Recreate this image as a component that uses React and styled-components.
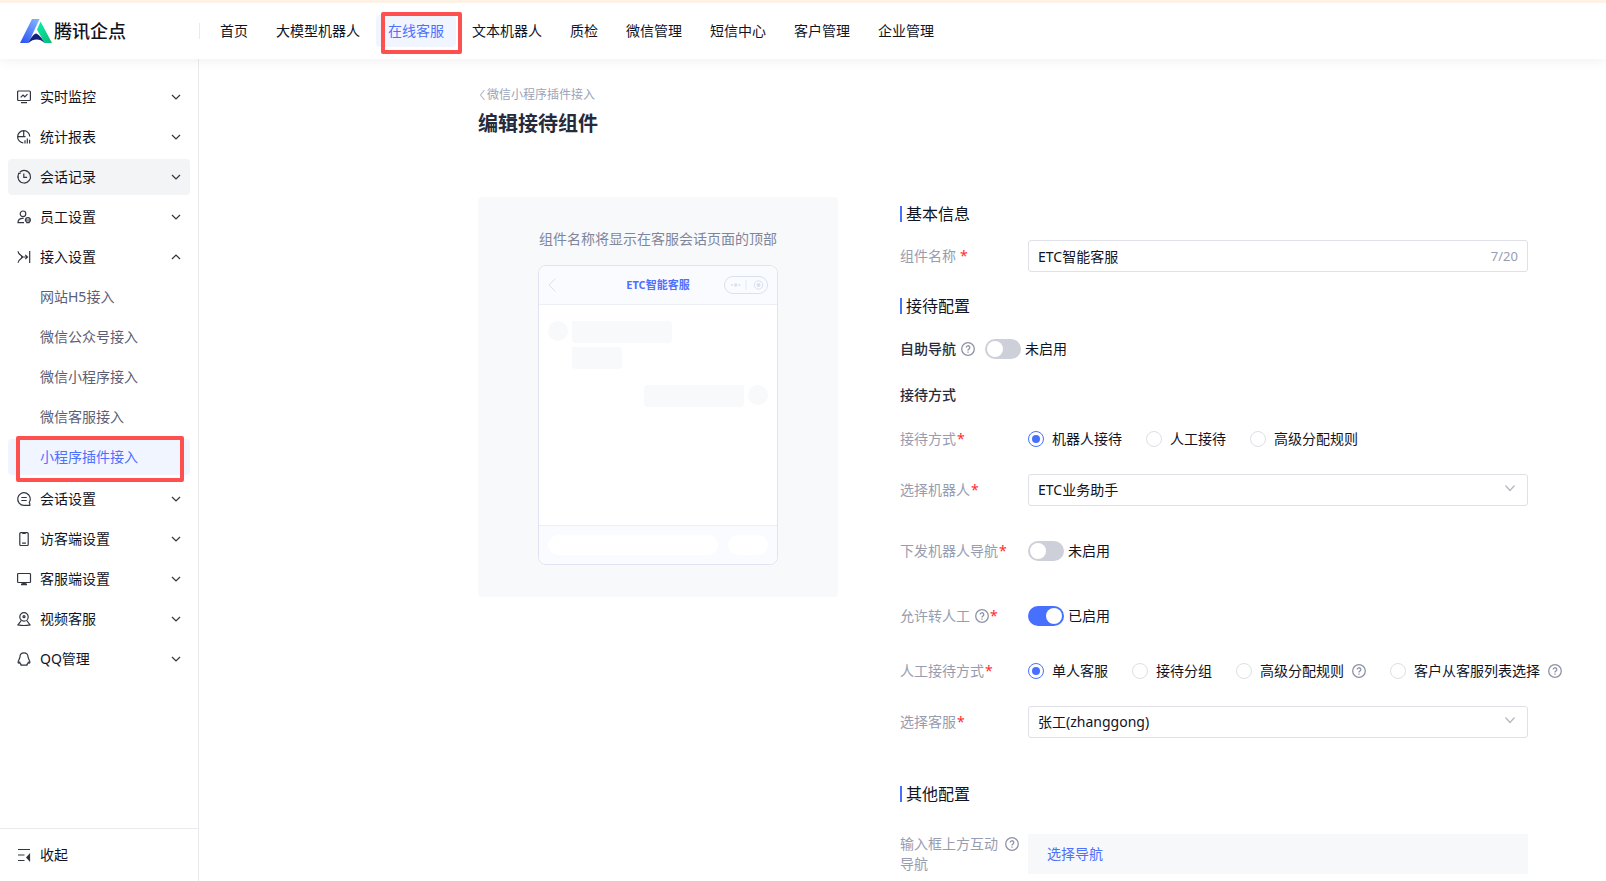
import React, { useState } from "react";
import styled, { createGlobalStyle, css } from "styled-components";

const GlobalStyle = createGlobalStyle`
  * {
    box-sizing: border-box;
  }
  body {
    margin: 0;
    background: #fff;
    color: #11131f;
    font-family: "Noto Sans", "Noto Sans CJK SC", sans-serif;
    font-size: 14px;
    line-height: 20px;
  }
  button, input, select {
    font: inherit;
    color: inherit;
    margin: 0;
  }
  a {
    color: inherit;
    text-decoration: none;
  }
`

const Page = styled.div`
  display: flex;
  flex-direction: column;
  height: 100vh;
  border-top: 3px solid #fef1e6;
  border-bottom: 1px solid #cfd2d6;
  overflow: hidden;
`
const Header = styled.header`
  display: flex;
  align-items: center;
  flex: none;
  height: 56px;
  background: #fff;
  box-shadow: 0 2px 12px rgba(0, 0, 0, .06);
  position: relative;
  z-index: 2;
`
const Brand = styled.a`
  display: flex;
  align-items: center;
  gap: 2px;
  width: 200px;
  flex: none;
  height: 16px;
  padding-left: 20px;
  border-right: 1px solid #e9eaee;
  font-size: 18px;
  font-weight: 500;
  white-space: nowrap;
`
const Nav = styled.nav`
  display: flex;
  gap: 4px;
  padding-left: 8px;
`
const NavLink = styled.a`
  position: relative;
  padding: 6px 12px;
  border-radius: 4px;
  white-space: nowrap;
  ${({ $active }) => $active && css`
    color: #4d70ff;
    background: #f1f5ff;
  `}
`
// red frame that hangs over the highlighted entry
const Marker = styled.span`
  position: absolute;
  border: 4px solid #ff5050;
  border-radius: 2px;
  pointer-events: none;
  z-index: 1;
`
const NavMarker = styled(Marker)`
  top: -3px;
  bottom: -7px;
  left: 5px;
  right: -6px;
`
const SideMarker = styled(Marker)`
  top: -3px;
  bottom: -7px;
  left: 8px;
  right: 6px;
`
const Body = styled.div`
  display: flex;
  flex: 1;
  min-height: 0;
`
const Sidebar = styled.aside`
  display: flex;
  flex-direction: column;
  flex: none;
  width: 199px;
  border-right: 1px solid #e9eaee;
`
const Menu = styled.nav`
  display: flex;
  flex-direction: column;
  gap: 4px;
  flex: 1;
  padding: 20px 8px;
`
const MenuButton = styled.button`
  display: flex;
  align-items: center;
  gap: 8px;
  height: 36px;
  padding: 0 9px 0 8px;
  border: 0;
  border-radius: 4px;
  background: ${({ $hover }) => ($hover ? "#f3f4f6" : "transparent")};
  text-align: left;
  cursor: pointer;
  span {
    flex: 1;
  }
`
const SubMenu = styled.div`
  display: flex;
  flex-direction: column;
  gap: 4px;
  padding-bottom: 2px;
`
const SubLink = styled.a`
  position: relative;
  height: 36px;
  padding: 8px 32px;
  border-radius: 4px;
  color: ${({ $active }) => ($active ? "#4d70ff" : "#5c6075")};
  background: ${({ $active }) => ($active ? "#f1f5ff" : "transparent")};
`
const Collapse = styled(MenuButton)`
  height: 53px;
  padding: 0 16px;
  border-top: 1px solid #e9eaee;
  border-radius: 0;
`
const Main = styled.main`
  flex: 1;
  min-width: 0;
  overflow: hidden;
  padding: 26px 24px 0 279px;
  @media (max-width: 1500px) {
    padding-left: 24px;
    overflow: auto;
  }
`
const BackLink = styled.a`
  display: flex;
  align-items: center;
  gap: 1px;
  color: #9ba3b8;
  font-size: 12px;
`
const PageTitle = styled.h1`
  margin: 4px 0 58px;
  color: #262b3c;
  font-size: 20px;
  font-weight: 700;
  line-height: 30px;
`
const Columns = styled.div`
  display: flex;
  align-items: flex-start;
  gap: 62px;
`
const Preview = styled.section`
  display: flex;
  flex-direction: column;
  align-items: center;
  gap: 16px;
  flex: none;
  width: 360px;
  padding: 32px 0;
  border-radius: 4px;
  background: #f8f9fb;
  color: #7f869c;
`
const Phone = styled.div`
  display: flex;
  flex-direction: column;
  width: 240px;
  height: 300px;
  border: 1px solid #e0e4f0;
  border-radius: 8px;
  background: #fff;
  overflow: hidden;
`
const PhoneBar = styled.div`
  display: flex;
  align-items: center;
  justify-content: space-between;
  height: 39px;
  padding: 0 9px;
  border-bottom: 1px solid #eceef6;
  background: #fafbff;
`
const PhoneTitle = styled.strong`
  flex: 1;
  padding-left: 36px;
  color: #4d70ff;
  font-size: 11px;
  text-align: center;
`
const Chat = styled.div`
  display: flex;
  flex-direction: column;
  gap: 16px;
  flex: 1;
  padding: 16px 9px;
`
const ChatLine = styled.div`
  display: flex;
  gap: 4px;
  flex-direction: ${({ $mine }) => ($mine ? "row-reverse" : "row")};
`
const Bubbles = styled.div`
  display: flex;
  flex-direction: column;
  gap: 4px;
`
const Avatar = styled.div`
  width: 20px;
  height: 20px;
  border-radius: 50%;
  background: #f8f9fb;
`
const Bubble = styled.div`
  width: ${({ $short }) => ($short ? "50px" : "100px")};
  height: 22px;
  border-radius: ${({ $mine }) => ($mine ? "4px 0 4px 4px" : "0 4px 4px 4px")};
  background: #f8f9fb;
`
const PhoneFoot = styled.div`
  display: flex;
  gap: 10px;
  height: 39px;
  padding: 9px;
  border-top: 1px solid #eceef6;
  background: #fafbff;
`
const Pill = styled.div`
  flex: ${({ $grow }) => $grow};
  height: 20px;
  border-radius: 10px;
  background: #fff;
`
const Form = styled.form`
  flex: 1;
  min-width: 0;
  padding-top: 5px;
`
const SectionTitle = styled.h2`
  display: flex;
  align-items: center;
  gap: 4px;
  margin: 0 0 ${({ $gap }) => $gap}px;
  font-size: 16px;
  font-weight: 400;
  line-height: 24px;
  &::before {
    content: "";
    width: 2px;
    height: 16px;
    background: #4770ff;
  }
`
const SubTitle = styled.h3`
  margin: 0 0 ${({ $gap }) => $gap}px;
  color: #262b3c;
  font-size: 14px;
  font-weight: 500;
  line-height: 24px;
`
const Row = styled.div`
  display: flex;
  align-items: center;
  min-height: 32px;
  margin-bottom: ${({ $gap }) => $gap || 0}px;
`
const Label = styled.label`
  flex: none;
  width: 128px;
  color: #989caf;
  white-space: nowrap;
`
const InlineLabel = styled.label`
  margin-right: 10px;
  color: #262b3c;
  font-weight: 500;
  white-space: nowrap;
`
const Star = styled.span`
  margin-left: ${({ $spaced }) => ($spaced ? "4px" : "1px")};
  color: #ff2b2b;
`
const Field = styled.div`
  position: relative;
  flex: 1;
  max-width: 500px;
  height: 32px;
  svg {
    position: absolute;
    top: 8px;
    right: 12px;
    pointer-events: none;
  }
`
const boxStyles = css`
  width: 100%;
  height: 32px;
  padding: 0 9px;
  border: 1px solid #dfe0e8;
  border-radius: 3px;
  background: #fff;
  outline: none;
`
const TextInput = styled.input`
  ${boxStyles}
`
const Select = styled.select`
  ${boxStyles}
  appearance: none;
`
const Counter = styled.span`
  position: absolute;
  top: 6px;
  right: 10px;
  color: #989caf;
  font-size: 13px;
`
const Toggle = styled.input`
  appearance: none;
  flex: none;
  width: 36px;
  height: 20px;
  border-radius: 10px;
  background: #cdcfd9;
  cursor: pointer;
  &::before {
    content: "";
    display: block;
    width: 16px;
    height: 16px;
    margin: 2px;
    border-radius: 50%;
    background: #fff;
  }
  &:checked {
    background: #4770ff;
  }
  &:checked::before {
    margin-left: 18px;
  }
`
const ToggleText = styled.span`
  margin-left: 4px;
`
const RadioGroup = styled.div`
  display: flex;
  gap: 24px;
`
const RadioLabel = styled.label`
  display: flex;
  align-items: center;
  gap: 8px;
  white-space: nowrap;
`
const Radio = styled.input`
  appearance: none;
  display: grid;
  place-items: center;
  width: 16px;
  height: 16px;
  border: 1px solid #dddfe7;
  border-radius: 50%;
  background: #fff;
  &:checked {
    border-color: #4770ff;
  }
  &:checked::before {
    content: "";
    width: 8px;
    height: 8px;
    border-radius: 50%;
    background: #4770ff;
  }
`
const PickBox = styled.div`
  flex: 1;
  max-width: 500px;
  padding: 10px 19px;
  background: #f7f8fa;
`
const LinkButton = styled.button`
  display: block;
  padding: 0;
  border: 0;
  background: none;
  color: #4d70ff;
  cursor: pointer;
`
const HelpSvg = styled.svg`
  display: inline-block;
  flex: none;
  vertical-align: -2px;
  margin-left: ${({ $gap }) => $gap || 0}px;
`

const Help = ({ gap }) => (
  <HelpSvg $gap={gap} width="14" height="14" viewBox="0 0 14 14" fill="none" stroke="#8e92a6">
    <circle cx="7" cy="7" r="6.3" strokeWidth="1.3" />
    <path d="M5.200 5.600a1.800 1.800 0 1 1 2.600 1.600c-.6.3-.8.6-.8 1.200M7 9.600v1.100" strokeWidth="1.300" />
  </HelpSvg>
)

const Chevron = ({ up }) => (
  <svg width="10" height="10" viewBox="0 0 10 10" fill="none" stroke="#33363f" strokeWidth="1.200">
    <path d={up ? "M1 7l4-4 4 4" : "M1 3l4 4 4-4"} />
  </svg>
)

const SelectArrow = () => (
  <svg width="12" height="12" viewBox="0 0 12 12" fill="none" stroke="#b4b6bf" strokeWidth="1.200">
    <path d="M1.500 3.500L6 8.500l4.500-5" />
  </svg>
)

const Logo = () => (
  <svg width="32" height="26" viewBox="0 0 32 26">
    <defs>
      <linearGradient id="logoBlue" x1="0.8" y1="0" x2="0.2" y2="1">
        <stop offset="0" stopColor="#7fb0ff" />
        <stop offset="1" stopColor="#2f57f6" />
      </linearGradient>
      <linearGradient id="logoGreen" x1="0" y1="0" x2="1" y2="1">
        <stop offset="0" stopColor="#0df0a8" />
        <stop offset="1" stopColor="#07b877" />
      </linearGradient>
    </defs>
    <path d="M12 1h7.500L8.500 25H0z" fill="url(#logoBlue)" />
    <path d="M20.500 3.500L32 25h-7.500L17 11.500z" fill="url(#logoGreen)" />
    <path d="M16 15.500c1.500 0 6 4 8.500 9.500-4.500-4.600-11-4.600-16 0 2-5.500 6-9.500 7.500-9.500z" fill="#14227a" />
  </svg>
)

const shapes = {
  monitor: (
    <>
      <rect x=".6" y="1" width="12.800" height="9.500" rx="1" />
      <path d="M3.700 7.400l2.300-2.300 1.800 1.700 2.700-2.700M4 12.600h6" />
    </>
  ),
  report: (
    <>
      <path d="M12.800 6.500A6.100 6.100 0 1 0 6.300 12.900M6.700.6v6.100H.7M6.700 6.700h1.800" />
      <path d="M8 10.300v3.200M10.300 8.500v5M12.600 9.700v3.800" />
    </>
  ),
  clock: (
    <>
      <path d="M2.800 2.200A6.300 6.300 0 1 1 1.500 4" />
      <path d="M1 3.400h2.600M.7 7H2M6.800 3.600v3.800h3.300" />
    </>
  ),
  staff: (
    <>
      <circle cx="6" cy="3.800" r="2.800" />
      <path d="M7 12.700H1c0-2.800 1.600-4.300 4.600-4.300h1" />
      <circle cx="10.900" cy="10" r="2.400" />
      <path d="M7.800 10h6M9.300 12.600h3.200" />
    </>
  ),
  access: <path d="M1 1.200c0 3 3.800 4.300 4.800 5.800C4.800 8.500 1 9.800 1 12.800M4 7h6.500M8.300 4.800L10.500 7 8.300 9.200M12.700 1v12" />,
  talk: (
    <>
      <path d="M12.300 10.400A6.300 6.300 0 1 0 7 13.300h5.800v-1.500z" />
      <path d="M4.300 5.500h5.400M4.300 8.500h5.400" />
    </>
  ),
  mobile: (
    <>
      <rect x="2.800" y=".6" width="8.400" height="12.900" rx="1" />
      <path d="M5.300 1.400h3.400M5.100 11.200h3.800" />
    </>
  ),
  desktop: (
    <>
      <rect x=".6" y="1.500" width="12.900" height="9" rx=".8" />
      <path d="M5.300 11.500h3.400M4 12.400h6" strokeWidth="1.600" />
    </>
  ),
  video: (
    <>
      <circle cx="7" cy="4.900" r="4.200" />
      <circle cx="7" cy="4.700" r="1" />
      <path d="M4.200 8.500L1 12.800c3 .7 9 .7 12 0L9.800 8.500" />
    </>
  ),
  qq: <path d="M7 .8C4.600.8 3 2.500 3 4.800c0 1.600-1.900 3.500-1.900 5.500 0 1.200 1 1 1.600.1.200.8.600 1.300 1.200 1.800-.5.500-.1 1 .9 1h4.400c1 0 1.400-.5.9-1 .6-.5 1-1 1.200-1.800.6.900 1.600 1.100 1.600-.1 0-2-1.900-3.900-1.900-5.500C11 2.500 9.400.8 7 .8z" />,
  fold: (
    <>
      <path d="M1 1.500h12M1 7h6.500M1 12.500h6.500" />
      <path d="M12.500 6.500v6L9.800 9.500z" fill="#252832" />
    </>
  )
}

const Icon = ({ name }) => (
  <svg width="16" height="16" viewBox="-1 -1 16 16" fill="none" stroke="#333641" strokeWidth="1.200">
    {shapes[name]}
  </svg>
)

const navItems = ["首页", "大模型机器人", "在线客服", "文本机器人", "质检", "微信管理", "短信中心", "客户管理", "企业管理"]

const menuItems = [
  { icon: "monitor", text: "实时监控" },
  { icon: "report", text: "统计报表" },
  { icon: "clock", text: "会话记录", hover: true },
  { icon: "staff", text: "员工设置" },
  {
    icon: "access",
    text: "接入设置",
    children: ["网站H5接入", "微信公众号接入", "微信小程序接入", "微信客服接入", "小程序插件接入"]
  },
  { icon: "talk", text: "会话设置" },
  { icon: "mobile", text: "访客端设置" },
  { icon: "desktop", text: "客服端设置" },
  { icon: "video", text: "视频客服" },
  { icon: "qq", text: "QQ管理" }
]

const SwitchField = ({ id, initial }) => {
  const [on, setOn] = useState(initial)
  return (
    <>
      <Toggle id={id} type="checkbox" role="switch" checked={on} onChange={() => setOn(!on)} />
      <ToggleText>{on ? "已启用" : "未启用"}</ToggleText>
    </>
  )
}

const Radios = ({ name, label, options }) => {
  const [value, setValue] = useState(0)
  return (
    <RadioGroup role="radiogroup" aria-label={label}>
      {options.map(({ text, help }, i) => (
        <RadioLabel key={text}>
          <Radio type="radio" name={name} checked={value === i} onChange={() => setValue(i)} />
          {text}
          {help && <Help />}
        </RadioLabel>
      ))}
    </RadioGroup>
  )
}

const PhonePreview = ({ title }) => (
  <Phone>
    <PhoneBar>
      <svg width="8" height="14" viewBox="0 0 8 14" fill="none" stroke="#dbe1ef">
        <path d="M7.500 .5L1 7l6.500 6.500" />
      </svg>
      <PhoneTitle>{title}</PhoneTitle>
      <svg width="44" height="18" viewBox="0 0 44 18" fill="#d9e0ee">
        <rect x=".5" y=".5" width="43" height="17" rx="8.500" fill="none" stroke="#d9e0ee" />
        <circle cx="8" cy="9" r="1" />
        <circle cx="11.700" cy="9" r="1.700" />
        <circle cx="15.500" cy="9" r="1" />
        <rect x="21.500" y="4" width="1" height="10" opacity=".6" />
        <circle cx="34.500" cy="9" r="4.200" fill="none" stroke="#d9e0ee" />
        <circle cx="34.500" cy="9" r="2" />
      </svg>
    </PhoneBar>
    <Chat>
      <ChatLine>
        <Avatar />
        <Bubbles>
          <Bubble />
          <Bubble $short />
        </Bubbles>
      </ChatLine>
      <ChatLine $mine>
        <Avatar />
        <Bubble $mine />
      </ChatLine>
    </Chat>
    <PhoneFoot>
      <Pill $grow={17} />
      <Pill $grow={4} />
    </PhoneFoot>
  </Phone>
)

const SideMenu = () => (
  <Sidebar>
    <Menu>
      {menuItems.map(({ icon, text, hover, children }) => (
        <React.Fragment key={text}>
          <MenuButton type="button" $hover={hover}>
            <Icon name={icon} />
            <span>{text}</span>
            <Chevron up={!!children} />
          </MenuButton>
          {children && (
            <SubMenu>
              {children.map((child, i) => (
                <SubLink key={child} href="#" $active={i === 4}>
                  {child}
                  {i === 4 && <SideMarker />}
                </SubLink>
              ))}
            </SubMenu>
          )}
        </React.Fragment>
      ))}
    </Menu>
    <Collapse type="button">
      <Icon name="fold" />
      <span>收起</span>
    </Collapse>
  </Sidebar>
)

const App = () => {
  const [name, setName] = useState("ETC智能客服")

  return (
    <Page>
      <GlobalStyle />
      <Header>
        <Brand href="#">
          <Logo />
          腾讯企点
        </Brand>
        <Nav>
          {navItems.map((item, i) => (
            <NavLink key={item} href="#" $active={i === 2}>
              {item}
              {i === 2 && <NavMarker />}
            </NavLink>
          ))}
        </Nav>
      </Header>
      <Body>
        <SideMenu />
        <Main>
          <BackLink href="#">
            <svg width="8" height="10" viewBox="0 0 8 10" fill="none" stroke="#b9bfce" strokeWidth="1.200">
              <path d="M6.500 0L2.500 5l4 5" />
            </svg>
            微信小程序插件接入
          </BackLink>
          <PageTitle>编辑接待组件</PageTitle>
          <Columns>
            <Preview>
              组件名称将显示在客服会话页面的顶部
              <PhonePreview title={name} />
            </Preview>
            <Form>
              <SectionTitle $gap={14}>基本信息</SectionTitle>
              <Row $gap={22}>
                <Label htmlFor="name">组件名称<Star $spaced>*</Star></Label>
                <Field>
                  <TextInput id="name" value={name} maxLength={20} onChange={e => setName(e.target.value)} />
                  <Counter>{name.length}/20</Counter>
                </Field>
              </Row>

              <SectionTitle $gap={15}>接待配置</SectionTitle>
              <Row $gap={18}>
                <InlineLabel htmlFor="selfNav">自助导航<Help gap={5} /></InlineLabel>
                <SwitchField id="selfNav" initial={false} />
              </Row>
              <SubTitle $gap={16}>接待方式</SubTitle>
              <Row $gap={19}>
                <Label as="span">接待方式<Star>*</Star></Label>
                <Radios
                  name="mode"
                  label="接待方式"
                  options={[{ text: "机器人接待" }, { text: "人工接待" }, { text: "高级分配规则" }]}
                />
              </Row>
              <Row $gap={29}>
                <Label htmlFor="robot">选择机器人<Star>*</Star></Label>
                <Field>
                  <Select id="robot">
                    <option>ETC业务助手</option>
                  </Select>
                  <SelectArrow />
                </Field>
              </Row>
              <Row $gap={33}>
                <Label htmlFor="robotNav">下发机器人导航<Star>*</Star></Label>
                <SwitchField id="robotNav" initial={false} />
              </Row>
              <Row $gap={23}>
                <Label htmlFor="toHuman">允许转人工<Help gap={5} /><Star>*</Star></Label>
                <SwitchField id="toHuman" initial />
              </Row>
              <Row $gap={19}>
                <Label as="span">人工接待方式<Star>*</Star></Label>
                <Radios
                  name="human"
                  label="人工接待方式"
                  options={[
                    { text: "单人客服" },
                    { text: "接待分组" },
                    { text: "高级分配规则", help: true },
                    { text: "客户从客服列表选择", help: true }
                  ]}
                />
              </Row>
              <Row $gap={44}>
                <Label htmlFor="agent">选择客服<Star>*</Star></Label>
                <Field>
                  <Select id="agent">
                    <option>张工(zhanggong)</option>
                  </Select>
                  <SelectArrow />
                </Field>
              </Row>

              <SectionTitle $gap={28}>其他配置</SectionTitle>
              <Row>
                <Label htmlFor="pickNav">
                  输入框上方互动<Help gap={7} />
                  <br />
                  导航
                </Label>
                <PickBox>
                  <LinkButton id="pickNav" type="button">选择导航</LinkButton>
                </PickBox>
              </Row>
            </Form>
          </Columns>
        </Main>
      </Body>
    </Page>
  )
}

export default App;
